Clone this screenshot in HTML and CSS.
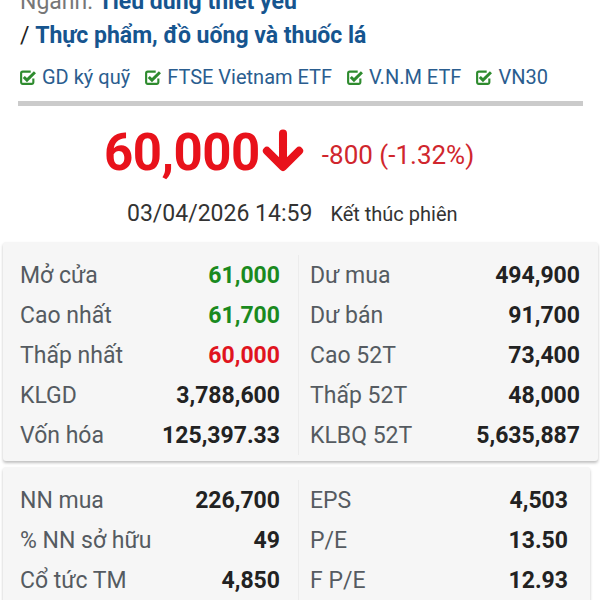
FILE: index.html
```html
<!DOCTYPE html>
<html lang="vi">

<head>
  <meta charset="UTF-8">
  <meta name="viewport" content="width=device-width, initial-scale=1.0">
  <title>Chi tiết cổ phiếu</title>
  <link rel="stylesheet" href="styles.css">
</head>

<body>
  <div id="page">
    <div class="sector">
      <div class="sector-line"><span class="muted">Ngành:</span> <b>Tiêu dùng thiết yếu</b></div>
      <div class="sector-line"><span class="dark">/</span> <b>Thực phẩm, đồ uống và thuốc lá</b></div>
    </div>

    <ul class="tags">
      <li><svg class="check" viewBox="0 0 16 16"><path d="M11 2.5H3.5a1.5 1.5 0 0 0-1.5 1.5v8.5a1.5 1.5 0 0 0 1.5 1.5H12a1.5 1.5 0 0 0 1.5-1.5V9" fill="none" stroke="#2e8b2e" stroke-width="2"/><path d="M4.5 7.5l3 3L15 3" fill="none" stroke="#2e8b2e" stroke-width="2.8"/></svg>GD ký quỹ</li>
      <li><svg class="check" viewBox="0 0 16 16"><path d="M11 2.5H3.5a1.5 1.5 0 0 0-1.5 1.5v8.5a1.5 1.5 0 0 0 1.5 1.5H12a1.5 1.5 0 0 0 1.5-1.5V9" fill="none" stroke="#2e8b2e" stroke-width="2"/><path d="M4.5 7.5l3 3L15 3" fill="none" stroke="#2e8b2e" stroke-width="2.8"/></svg>FTSE Vietnam ETF</li>
      <li><svg class="check" viewBox="0 0 16 16"><path d="M11 2.5H3.5a1.5 1.5 0 0 0-1.5 1.5v8.5a1.5 1.5 0 0 0 1.5 1.5H12a1.5 1.5 0 0 0 1.5-1.5V9" fill="none" stroke="#2e8b2e" stroke-width="2"/><path d="M4.5 7.5l3 3L15 3" fill="none" stroke="#2e8b2e" stroke-width="2.8"/></svg>V.N.M ETF</li>
      <li><svg class="check" viewBox="0 0 16 16"><path d="M11 2.5H3.5a1.5 1.5 0 0 0-1.5 1.5v8.5a1.5 1.5 0 0 0 1.5 1.5H12a1.5 1.5 0 0 0 1.5-1.5V9" fill="none" stroke="#2e8b2e" stroke-width="2"/><path d="M4.5 7.5l3 3L15 3" fill="none" stroke="#2e8b2e" stroke-width="2.8"/></svg>VN30</li>
    </ul>

    <div class="bar"></div>

    <div class="price">
      <span class="price-value">60,000</span>
      <svg class="arrow" viewBox="0 0 40 40"><path d="M20 4v28M6 19l14 14 14-14" fill="none" stroke="#e8121b" stroke-width="7" stroke-linecap="round" stroke-linejoin="round"/></svg>
      <span class="price-change">-800 (-1.32%)</span>
    </div>

    <div class="time">
      <span class="time-date">03/04/2026 14:59</span>
      <span class="time-state">Kết thúc phiên</span>
    </div>

    <div class="card">
      <div class="col">
        <div class="row"><span class="label">Mở cửa</span><span class="val up">61,000</span></div>
        <div class="row"><span class="label">Cao nhất</span><span class="val up">61,700</span></div>
        <div class="row"><span class="label">Thấp nhất</span><span class="val down">60,000</span></div>
        <div class="row"><span class="label">KLGD</span><span class="val">3,788,600</span></div>
        <div class="row"><span class="label">Vốn hóa</span><span class="val">125,397.33</span></div>
      </div>
      <div class="col">
        <div class="row"><span class="label">Dư mua</span><span class="val">494,900</span></div>
        <div class="row"><span class="label">Dư bán</span><span class="val">91,700</span></div>
        <div class="row"><span class="label">Cao 52T</span><span class="val">73,400</span></div>
        <div class="row"><span class="label">Thấp 52T</span><span class="val">48,000</span></div>
        <div class="row"><span class="label">KLBQ 52T</span><span class="val">5,635,887</span></div>
      </div>
    </div>

    <div class="card card-narrow">
      <div class="col">
        <div class="row"><span class="label">NN mua</span><span class="val">226,700</span></div>
        <div class="row"><span class="label">% NN sở hữu</span><span class="val">49</span></div>
        <div class="row"><span class="label">Cổ tức TM</span><span class="val">4,850</span></div>
      </div>
      <div class="col">
        <div class="row"><span class="label">EPS</span><span class="val">4,503</span></div>
        <div class="row"><span class="label">P/E</span><span class="val">13.50</span></div>
        <div class="row"><span class="label">F P/E</span><span class="val">12.93</span></div>
      </div>
    </div>
  </div>
</body>

</html>
```

FILE: styles.css
```css
* {
  margin: 0;
  padding: 0;
  box-sizing: border-box;
}

body {
  background: #fff;
  font-family: Roboto, "Noto Sans", sans-serif;
  overflow: hidden;
}

#page {
  width: 600px;
  height: 600px;
  overflow: hidden;
}

/* ngành */
.sector {
  margin-top: -15px;
  padding: 0 20px;
  font-size: 23px;
  line-height: 34px;
  color: #16558f;
}

.sector b {
  font-weight: 700;
}

.sector .muted {
  color: #777;
}

.sector .dark {
  color: #222;
}

/* tags */
.tags {
  display: flex;
  gap: 14px;
  list-style: none;
  padding: 12px 19px 0;
  font-size: 20px;
  line-height: 24px;
  color: #2a5d8f;
}

.tags li {
  display: flex;
  align-items: center;
  gap: 6px;
}

.check {
  width: 17px;
  height: 17px;
}

.bar {
  height: 5px;
  margin: 12px 17px 0 18px;
  background: #cbcbcb;
}

/* giá */
.price {
  display: flex;
  align-items: center;
  padding: 0 0 0 104px;
  height: 92px;
}

.price-value {
  font-size: 51px;
  font-weight: 700;
  color: #e8121b;
  letter-spacing: -0.5px;
}

.arrow {
  width: 46px;
  height: 46px;
}

.price-change {
  margin-left: 16px;
  margin-top: 6px;
  font-size: 26px;
  color: #d0262d;
}

.time {
  display: flex;
  align-items: baseline;
  padding: 1px 0 0 127px;
  height: 44px;
  line-height: 30px;
}

.time-date {
  font-size: 23px;
  color: #333;
}

.time-state {
  margin-left: 18px;
  font-size: 20px;
  color: #333;
}

/* bảng */
.card {
  display: flex;
  margin: 0 2px 0 3px;
  padding: 13px 0 6px;
  background: #f6f6f6;
  border-radius: 3px;
  box-shadow: 0 2px 3px rgba(0, 0, 0, 0.25);
}

.card-narrow {
  margin: 6px 10px 0 3px;
}

.col {
  width: 295px;
  padding: 0 0 0 17px;
}

.col + .col {
  flex: 1;
  border-left: 1px solid #ececec;
  padding: 0 18px 0 11px;
}

.card-narrow .col + .col {
  padding-right: 22px;
}

.row {
  display: flex;
  justify-content: space-between;
  align-items: center;
  height: 40px;
  font-size: 23px;
}

.col:first-child .row {
  padding-right: 18px;
}

.label {
  color: #555b61;
}

.val {
  font-weight: 700;
  color: #222;
}

.val.up {
  color: #1a8a1e;
}

.val.down {
  color: #e0141e;
}
```
